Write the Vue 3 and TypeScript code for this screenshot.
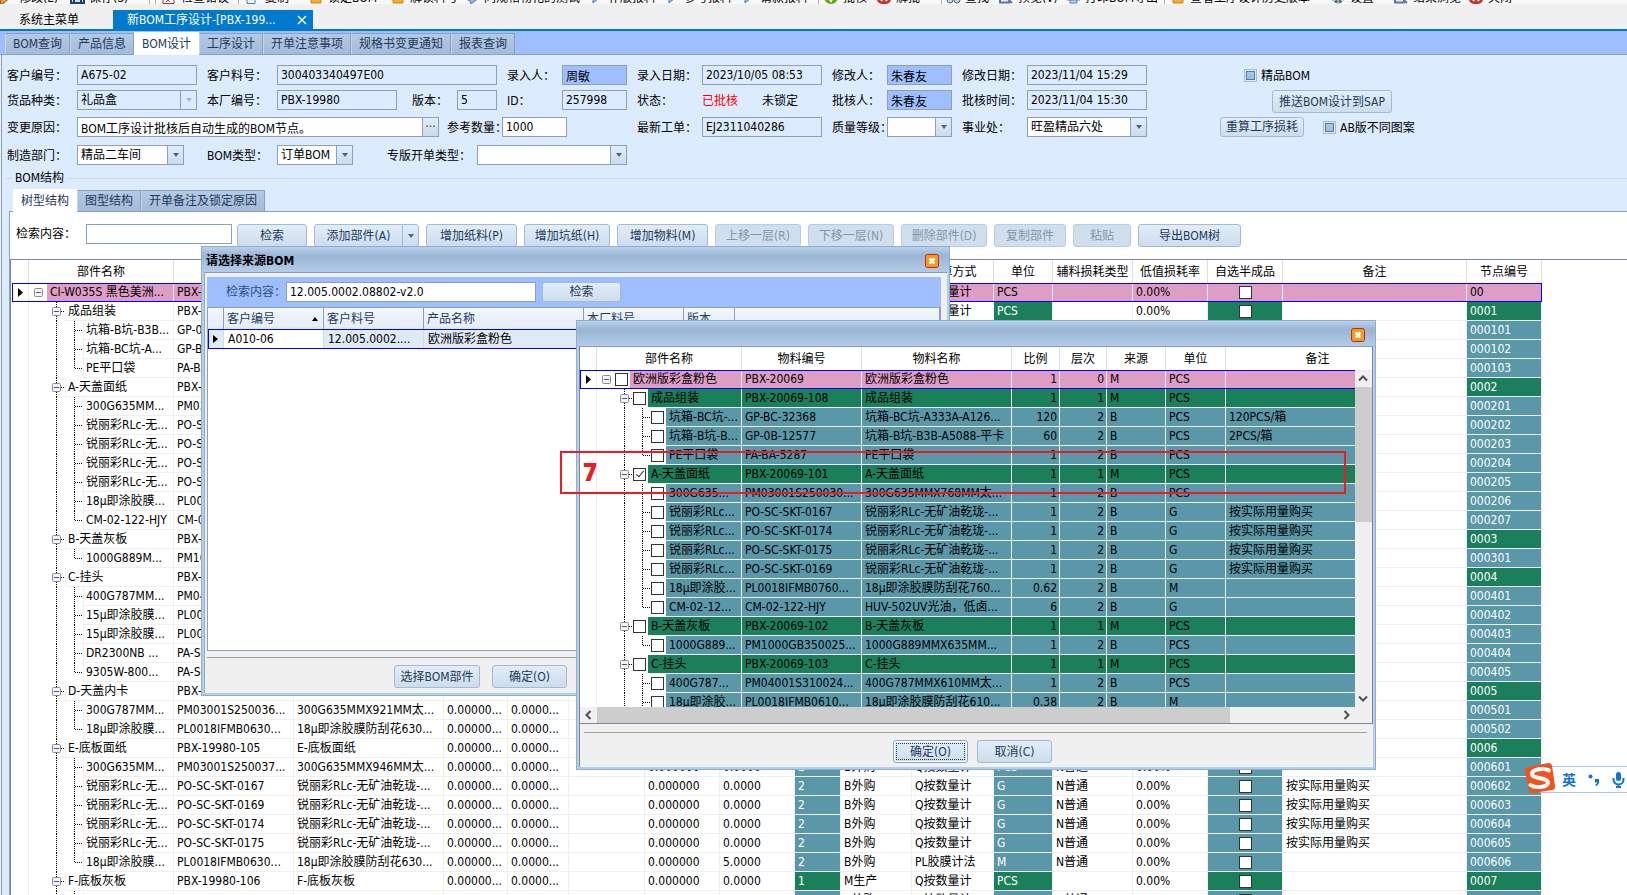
<script setup lang="ts">
import { computed, ref } from 'vue'

interface ToolItem { icon: string; text: string; width: number }
interface TreeRow { level: number; name: string; code: string; full: string; unit: string; node?: string; remark?: string; ratio?: string; checked?: boolean }

const toolItems: ToolItem[] = [
  { icon: 'pen', text: '修改(E)', width: 70 },
  { icon: 'disk', text: '保存(S)', width: 79 },
  { icon: 'sep', text: '', width: 6 },
  { icon: 'sep', text: '', width: 7 },
  { icon: 'doc', text: '检查错误', width: 76 },
  { icon: 'sep', text: '', width: 8 },
  { icon: 'copy', text: '复制', width: 63 },
  { icon: 'lock', text: '锁定BOM', width: 82 },
  { icon: 'lock', text: '解锁料号', width: 74 },
  { icon: 'chat', text: '同规格物化的测试', width: 124 },
  { icon: 'flag', text: '补版报料', width: 76 },
  { icon: 'flag', text: '参考报料', width: 76 },
  { icon: 'flag', text: '请款报料', width: 77 },
  { icon: 'sep', text: '', width: 6 },
  { icon: 'ok', text: '批核', width: 53 },
  { icon: 'no', text: '解批', width: 64 },
  { icon: 'sep', text: '', width: 5 },
  { icon: 'find', text: '查找', width: 53 },
  { icon: 'view', text: '预览(V)', width: 67 },
  { icon: 'print', text: '打印BOM导出', width: 98 },
  { icon: 'sep', text: '', width: 7 },
  { icon: 'lock', text: '查看工序设计历史版本', width: 160 },
  { icon: 'gear', text: '设置', width: 63 },
  { icon: 'view', text: '结果浏览', width: 75 },
  { icon: 'no', text: '关闭', width: 60 }
]

const pageTabs = ['BOM查询', '产品信息', 'BOM设计', '工序设计', '开单注意事项', '规格书变更通知', '报表查询']
const subTabs = ['树型结构', '图型结构', '开单备注及锁定原因']
const actions = [
  { text: '增加纸料(P)', cls: 'a91', off: false },
  { text: '增加坑纸(H)', cls: 'a86', off: false },
  { text: '增加物料(M)', cls: 'a91', off: false },
  { text: '上移一层(R)', cls: 'a86', off: true },
  { text: '下移一层(N)', cls: 'a86', off: true },
  { text: '删除部件(D)', cls: 'a86', off: true },
  { text: '复制部件', cls: 'a72', off: true },
  { text: '粘贴', cls: 'a58', off: true },
  { text: '导出BOM树', cls: 'a103', off: false }
]

const mainHeads = ['', '部件名称', '', '', '', '', '', '', '', '', '', '计算方式', '单位', '辅料损耗类型', '低值损耗率', '自选半成品', '备注', '节点编号']

const r = (level: number, name: string, code: string, full: string, node: string, unit: string, remark = ''): TreeRow => ({ level, name, code, full, node, unit, remark })
const buy = '按实际用量购买'
const ink = '锐丽彩RLc-无...'
const inkFull = '锐丽彩RLc-无矿油乾珑-...'
const mainRows: TreeRow[] = [
  r(0, 'CI-W035S 黑色美洲...', 'PBX-19980', 'CI-W035S 黑色美洲版', '00', 'PCS'),
  r(1, '成品组装', 'PBX-19980-108', '成品组装', '0001', 'PCS'),
  r(2, '坑箱-B坑-B3B...', 'GP-0B-12577', '坑箱-B坑-B3B', '000101', 'PCS'),
  r(2, '坑箱-BC坑-A...', 'GP-BC-32368', '坑箱-BC坑', '000102', 'PCS'),
  r(2, 'PE平口袋', 'PA-BA-5287', 'PE平口袋', '000103', 'PCS'),
  r(1, 'A-天盖面纸', 'PBX-19980-101', 'A-天盖面纸', '0002', 'PCS'),
  r(2, '300G635MM...', 'PM03001S250030...', '300G635MM', '000201', 'PCS'),
  r(2, ink, 'PO-SC-SKT-0167', inkFull, '000202', 'G', buy),
  r(2, ink, 'PO-SC-SKT-0174', inkFull, '000203', 'G'),
  r(2, ink, 'PO-SC-SKT-0175', inkFull, '000204', 'G'),
  r(2, ink, 'PO-SC-SKT-0169', inkFull, '000205', 'G'),
  r(2, '18µ即涂胶膜...', 'PL0018IFMB0760...', '18µ即涂胶膜', '000206', 'M'),
  r(2, 'CM-02-122-HJY', 'CM-02-122-HJY', 'HUV-502UV光油', '000207', 'G'),
  r(1, 'B-天盖灰板', 'PBX-19980-102', 'B-天盖灰板', '0003', 'PCS'),
  r(2, '1000G889M...', 'PM1000GB350025...', '1000G889MM', '000301', 'PCS'),
  r(1, 'C-挂头', 'PBX-19980-103', 'C-挂头', '0004', 'PCS'),
  r(2, '400G787MM...', 'PM04001S310024...', '400G787MM', '000401', 'PCS'),
  r(2, '15µ即涂胶膜...', 'PL0015IFMB0610...', '15µ即涂胶膜', '000402', 'M'),
  r(2, '15µ即涂胶膜...', 'PL0015IFMB0610...', '15µ即涂胶膜', '000403', 'M'),
  r(2, 'DR2300NB ...', 'PA-SC-2300', 'DR2300NB', '000404', 'PCS'),
  r(2, '9305W-800...', 'PA-SC-9305', '9305W-800', '000405', 'PCS'),
  r(1, 'D-天盖内卡', 'PBX-19980-104', 'D-天盖内卡', '0005', 'PCS'),
  r(2, '300G787MM...', 'PM03001S250036...', '300G635MMX921MM太...', '000501', 'PCS'),
  r(2, '18µ即涂胶膜...', 'PL0018IFMB0630...', '18µ即涂胶膜防刮花630...', '000502', 'M'),
  r(1, 'E-底板面纸', 'PBX-19980-105', 'E-底板面纸', '0006', 'PCS'),
  r(2, '300G635MM...', 'PM03001S250037...', '300G635MMX946MM太...', '000601', 'PCS'),
  r(2, ink, 'PO-SC-SKT-0167', inkFull, '000602', 'G', buy),
  r(2, ink, 'PO-SC-SKT-0169', inkFull, '000603', 'G', buy),
  r(2, ink, 'PO-SC-SKT-0174', inkFull, '000604', 'G', buy),
  r(2, ink, 'PO-SC-SKT-0175', inkFull, '000605', 'G', buy),
  r(2, '18µ即涂胶膜...', 'PL0018IFMB0630...', '18µ即涂胶膜防刮花630...', '000606', 'M'),
  r(1, 'F-底板灰板', 'PBX-19980-106', 'F-底板灰板', '0007', 'PCS'),
  r(2, '1000G889M...', 'PM1000GB350026...', '1000G889MMX635MM...', '000701', 'PCS')
]

const s = (level: number, name: string, code: string, full: string, ratio: string, unit: string, remark = '', checked = false): TreeRow => ({ level, name, code, full, ratio, unit, remark, checked })
const pickRows = ref<TreeRow[]>([
  s(0, '欧洲版彩盒粉色', 'PBX-20069', '欧洲版彩盒粉色', '1', 'PCS'),
  s(1, '成品组装', 'PBX-20069-108', '成品组装', '1', 'PCS'),
  s(2, '坑箱-BC坑-...', 'GP-BC-32368', '坑箱-BC坑-A333A-A126...', '120', 'PCS', '120PCS/箱'),
  s(2, '坑箱-B坑-B...', 'GP-0B-12577', '坑箱-B坑-B3B-A5088-平卡', '60', 'PCS', '2PCS/箱'),
  s(2, 'PE平口袋', 'PA-BA-5287', 'PE平口袋', '1', 'PCS'),
  s(1, 'A-天盖面纸', 'PBX-20069-101', 'A-天盖面纸', '1', 'PCS', '', true),
  s(2, '300G635...', 'PM03001S250030...', '300G635MMX768MM太...', '1', 'PCS'),
  s(2, '锐丽彩RLc...', 'PO-SC-SKT-0167', inkFull, '1', 'G', buy),
  s(2, '锐丽彩RLc...', 'PO-SC-SKT-0174', inkFull, '1', 'G', buy),
  s(2, '锐丽彩RLc...', 'PO-SC-SKT-0175', inkFull, '1', 'G', buy),
  s(2, '锐丽彩RLc...', 'PO-SC-SKT-0169', inkFull, '1', 'G', buy),
  s(2, '18µ即涂胶...', 'PL0018IFMB0760...', '18µ即涂胶膜防刮花760...', '0.62', 'M'),
  s(2, 'CM-02-12...', 'CM-02-122-HJY', 'HUV-502UV光油，低卤...', '6', 'G'),
  s(1, 'B-天盖灰板', 'PBX-20069-102', 'B-天盖灰板', '1', 'PCS'),
  s(2, '1000G889...', 'PM1000GB350025...', '1000G889MMX635MM...', '1', 'PCS'),
  s(1, 'C-挂头', 'PBX-20069-103', 'C-挂头', '1', 'PCS'),
  s(2, '400G787...', 'PM04001S310024...', '400G787MMX610MM太...', '1', 'PCS'),
  s(2, '18µ即涂胶...', 'PL0018IFMB0610...', '18µ即涂胶膜防刮花610...', '0.38', 'M')
])

const LINE: Record<string, string> = {
  none: '',
  rootbox: '',
  box: 'M9.5 0V5M9.5 14V19M14 9.5H18',
  v: 'M9.5 0V19',
  t: 'M9.5 0V19M10 9.5H18',
  l: 'M9.5 0V10M10 9.5H18'
}
function indents(rows: TreeRow[], i: number): string[] {
  const lv = rows[i].level
  if (lv === 0) return ['rootbox']
  if (lv === 1) return ['none', 'box']
  return ['none', 'v', rows[i + 1]?.level === 1 ? 'l' : 't']
}
const mainTree = computed(() => mainRows.map((row, i) => ({ row, marks: indents(mainRows, i) })))
const pickTree = computed(() => pickRows.value.map((row, i) => ({ row, marks: indents(pickRows.value, i) })))

const srcKeyword = ref('12.005.0002.08802-v2.0')
const keyword = ref('')
</script>

<template>
  <div class="app">
    <div class="toolbar">
      <div v-for="(t, i) in toolItems" :key="i" class="tool" :style="{ width: t.width + 'px' }">
        <span v-if="t.icon === 'sep'" class="tsep"></span>
        <template v-else>
          <svg width="15" height="14" viewBox="0 0 15 14" aria-hidden="true">
            <path v-if="t.icon === 'pen'" d="M0 14l1-5 8-8 4 4-9 8z" fill="#e8a03c" stroke="#8c5a28" />
            <path v-else-if="t.icon === 'disk'" d="M1 1h13v12H1zM4 9h7v4H4z" fill="#cfe0f2" stroke="#1f3f74" stroke-width="2" />
            <path v-else-if="t.icon === 'doc'" d="M1 .5h11v13H1zM4 8l4 4M8 8l-4 4" fill="#fff" stroke="#9a3b3b" />
            <path v-else-if="t.icon === 'copy'" d="M4 .5h9v9H4zM1 4h8v9.500H1z" fill="#f2f5fc" stroke="#6474b4" />
            <path v-else-if="t.icon === 'lock'" d="M2 6h10v7H2zM4 6V2h6v4" fill="#eab03a" stroke="#c98a16" />
            <path v-else-if="t.icon === 'chat'" d="M2 4h10l2 4-4 3-4 3-1-3-4-2z" fill="#8fb4e0" stroke="#557fb5" />
            <path v-else-if="t.icon === 'flag'" d="M4 0v13l6-5-6-3" fill="#9fc0e6" stroke="#4b78b0" />
            <g v-else-if="t.icon === 'ok'"><circle cx="7" cy="7" r="7" fill="#5da81e" /><path d="M4 7l3 4 4-7" fill="none" stroke="#fff" stroke-width="2" /></g>
            <g v-else-if="t.icon === 'no'"><rect x="0" y="0" width="14" height="14" rx="5" fill="#c8322b" /><path d="M4 4l6 7M10 4l-6 7" stroke="#fff" stroke-width="2" /></g>
            <g v-else-if="t.icon === 'find'" fill="#c7d3e3" stroke="#56657a"><circle cx="4" cy="10" r="3" /><circle cx="11" cy="10" r="3" /></g>
            <path v-else-if="t.icon === 'view'" d="M1 .5h9v12H1zM7 7l6 6" fill="#e8eefb" stroke="#6671a8" stroke-width="2" />
            <path v-else-if="t.icon === 'print'" d="M1 4h13v6H1zM4 8h7v5H4z" fill="#bcd2ee" stroke="#5f7fae" />
            <circle v-else cx="7" cy="7" r="5" fill="#c3cddb" stroke="#5e6d84" stroke-width="3" stroke-dasharray="3 1" />
          </svg>
          <span class="tname">{{ t.text }}</span>
        </template>
      </div>
    </div>

    <nav class="docs">
      <button type="button" class="doc">系统主菜单</button>
      <button type="button" class="doc doc-on">
        <span>新BOM工序设计-[PBX-199...</span>
        <svg width="10" height="10" viewBox="0 0 10 10" aria-hidden="true"><path d="M1 1l8 8M9 1l-8 8" stroke="#fff" stroke-width="1.500" /></svg>
      </button>
    </nav>

    <nav class="tabs page-tabs">
      <button v-for="t in pageTabs" :key="t" type="button" class="tab" :class="{ on: t === 'BOM设计' }">{{ t }}</button>
    </nav>

    <main class="panel">
      <form class="form" @submit.prevent>
        <div class="row">
          <label class="f"><span class="l70">客户编号：</span><input class="w120 ro" value="A675-02" readonly></label>
          <label class="f"><span class="l70">客户料号：</span><input class="w220 ro" value="300403340497E00" readonly></label>
          <label class="f"><span class="l55">录入人：</span><input class="w65 who" value="周敏" readonly></label>
          <label class="f"><span class="l65">录入日期：</span><input class="w120 ro" value="2023/10/05 08:53" readonly></label>
          <label class="f"><span class="l55">修改人：</span><input class="w65 who" value="朱春友" readonly></label>
          <label class="f"><span class="l65">修改日期：</span><input class="w120 ro" value="2023/11/04 15:29" readonly></label>
          <label class="f tick tick-a"><input type="checkbox" class="tri"><span>精品BOM</span></label>
        </div>
        <div class="row row2">
          <label class="f"><span class="l70">货品种类：</span><span class="combo w120 ro"><select disabled><option>礼品盒</option></select><i class="arr off"></i></span></label>
          <label class="f"><span class="l70">本厂编号：</span><input class="w120 ro" value="PBX-19980" readonly></label>
          <label class="f"><span class="l50">版本：</span><input class="w40 ro" value="5" readonly></label>
          <label class="f"><span class="l55">ID：</span><input class="w65 ro" value="257998" readonly></label>
          <div class="f"><span class="l65">状态：</span><span class="l60 red">已批核</span><span class="l60">未锁定</span></div>
          <label class="f"><span class="l55">批核人：</span><input class="w65 who" value="朱春友" readonly></label>
          <label class="f"><span class="l65">批核时间：</span><input class="w120 ro" value="2023/11/04 15:30" readonly></label>
          <button type="button" class="btn push">推送BOM设计到SAP</button>
        </div>
        <div class="row row3">
          <label class="f"><span class="l70">变更原因：</span><span class="combo w362"><input value="BOM工序设计批核后自动生成的BOM节点。"><i class="dots">···</i></span></label>
          <label class="f near"><span class="l55">参考数量：</span><input class="w65" value="1000"></label>
          <label class="f far"><span class="l65">最新工单：</span><input class="w120 ro" value="EJ2311040286" readonly></label>
          <label class="f"><span class="l55">质量等级：</span><span class="combo w65"><select><option></option></select><i class="arr"></i></span></label>
          <label class="f"><span class="l65">事业处：</span><span class="combo w120"><select><option>旺盈精品六处</option></select><i class="arr"></i></span></label>
          <button type="button" class="btn recalc">重算工序损耗</button>
          <label class="f tick"><input type="checkbox" class="tri"><span>AB版不同图案</span></label>
        </div>
        <div class="row">
          <label class="f"><span class="l70">制造部门：</span><span class="combo w107"><select><option>精品二车间</option></select><i class="arr"></i></span></label>
          <label class="f bomtype"><span class="l70">BOM类型：</span><span class="combo w76"><select><option>订单BOM</option></select><i class="arr"></i></span></label>
          <label class="f special"><span class="l90">专版开单类型：</span><span class="combo w150"><select><option></option></select><i class="arr"></i></span></label>
        </div>
      </form>

      <section class="box">
        <h2 class="legend"><span>BOM结构</span></h2>
        <nav class="tabs sub-tabs">
          <button v-for="t in subTabs" :key="t" type="button" class="tab" :class="{ on: t === '树型结构' }">{{ t }}</button>
        </nav>
        <div class="sheet">
          <div class="bar">
            <label class="f"><span class="l70">检索内容：</span><input v-model="keyword" class="w146"></label>
            <button type="button" class="btn find">检索</button>
            <div class="split"><button type="button" class="btn a89">添加部件(A)</button><button type="button" class="btn drop" aria-label="更多"><i class="tri-down"></i></button></div>
            <button v-for="a in actions" :key="a.text" type="button" class="btn" :class="a.cls" :disabled="a.off">{{ a.text }}</button>
          </div>

          <div class="gridwrap">
            <table class="grid main-grid">
              <colgroup>
                <col class="c17"><col class="c145"><col class="c120"><col class="c150"><col class="c64"><col class="c61"><col class="c76"><col class="c75"><col class="c75"><col class="c46"><col class="c71"><col class="c82"><col class="c59"><col class="c80"><col class="c75"><col class="c75"><col class="c184"><col class="c75">
              </colgroup>
              <thead><tr><th v-for="(h, i) in mainHeads" :key="i">{{ h }}</th></tr></thead>
              <tbody>
                <tr v-for="({ row, marks }, i) in mainTree" :key="i" :class="'lv' + row.level">
                  <td class="ind"><svg v-if="i === 0" width="5" height="9" viewBox="0 0 5 9"><path d="M0 0l5 4.500L0 9z" /></svg></td>
                  <td class="tree"><div class="node">
                    <svg v-for="(m, k) in marks" :key="k" class="mark" width="18" height="19" viewBox="0 0 18 19">
                      <path v-if="LINE[m]" :d="LINE[m]" stroke="#000" stroke-dasharray="1 1" fill="none" />
                      <g v-if="m === 'box' || m === 'rootbox'"><rect x="5.500" y="5.500" width="8" height="8" rx="1" fill="#f5f5f5" stroke="#8c8c8c" /><path d="M7 9.500h5" stroke="#3458a8" /></g>
                    </svg>
                    <span class="name">{{ row.name }}</span>
                  </div></td>
                  <td>{{ row.code }}</td>
                  <td>{{ row.full }}</td>
                  <td>0.00000...</td>
                  <td>0.0000...</td>
                  <td></td>
                  <td>0.000000</td>
                  <td>{{ row.unit === 'M' ? '5.0000' : '0.0000' }}</td>
                  <td class="tint">{{ row.level }}</td>
                  <td>{{ row.level === 2 ? 'B外购' : 'M生产' }}</td>
                  <td>{{ row.unit === 'M' ? 'PL胶膜计法' : 'Q按数量计' }}</td>
                  <td class="tint">{{ row.unit }}</td>
                  <td>{{ row.level === 2 ? 'N普通' : '' }}</td>
                  <td>0.00%</td>
                  <td class="tint mid"><input type="checkbox" class="chk" aria-label="自选半成品"></td>
                  <td>{{ row.remark }}</td>
                  <td class="tint">{{ row.node }}</td>
                </tr>
              </tbody>
            </table>
          </div>
        </div>
      </section>
    </main>

    <section class="win win-source" role="dialog" aria-label="请选择来源BOM">
      <header class="cap"><strong>请选择来源BOM</strong>
        <button type="button" class="close" aria-label="关闭"><svg width="14" height="14" viewBox="0 0 14 14"><rect x=".5" y=".5" width="13" height="13" rx="2" fill="#f59a1c" stroke="#c02a1a" /><path d="M4.500 4.500l5 5M9.500 4.500l-5 5" stroke="#fff" stroke-width="2.500" /></svg></button>
      </header>
      <div class="body src-body">
        <div class="src-bar">
          <label class="f"><span class="l60">检索内容：</span><input v-model="srcKeyword" class="w250"></label>
          <button type="button" class="btn src-find">检索</button>
        </div>
        <div class="src-list">
          <table class="src-grid">
            <colgroup><col class="c16"><col class="c100"><col class="c100"><col class="c160"><col class="c100"><col class="c51"><col></colgroup>
            <thead><tr><th></th><th><span class="sorted">客户编号<i class="tri-up"></i></span></th><th>客户料号</th><th>产品名称</th><th>本厂料号</th><th>版本</th><th></th></tr></thead>
            <tbody><tr><td class="ind"><svg width="5" height="8" viewBox="0 0 5 8"><path d="M0 0l5 4L0 8z" /></svg></td><td class="cur">A010-06</td><td>12.005.0002....</td><td>欧洲版彩盒粉色</td><td></td><td></td><td></td></tr></tbody>
          </table>
        </div>
        <footer class="src-foot">
          <button type="button" class="btn a86">选择BOM部件</button>
          <button type="button" class="btn a75">确定(O)</button>
          <button type="button" class="btn a75">取消(C)</button>
        </footer>
      </div>
    </section>

    <section class="win win-pick" role="dialog" aria-label="选择部件">
      <header class="cap">
        <button type="button" class="close" aria-label="关闭"><svg width="14" height="14" viewBox="0 0 14 14"><rect x=".5" y=".5" width="13" height="13" rx="2" fill="#f59a1c" stroke="#c02a1a" /><path d="M4.500 4.500l5 5M9.500 4.500l-5 5" stroke="#fff" stroke-width="2.500" /></svg></button>
      </header>
      <div class="body pick-body">
        <div class="pick-list">
          <table class="grid pick-grid">
            <colgroup><col class="c17"><col class="c145"><col class="c120"><col class="c150"><col class="c48"><col class="c47"><col class="c59"><col class="c60"><col class="c184"></colgroup>
            <thead><tr><th></th><th>部件名称</th><th>物料编号</th><th>物料名称</th><th>比例</th><th>层次</th><th>来源</th><th>单位</th><th>备注</th></tr></thead>
            <tbody>
              <tr v-for="({ row, marks }, i) in pickTree" :key="i" :class="'lv' + row.level">
                <td class="ind"><svg v-if="i === 0" width="5" height="9" viewBox="0 0 5 9"><path d="M0 0l5 4.500L0 9z" /></svg></td>
                <td class="tree"><div class="node">
                  <svg v-for="(m, k) in marks" :key="k" class="mark" width="18" height="19" viewBox="0 0 18 19">
                    <path v-if="LINE[m]" :d="LINE[m]" stroke="#000" stroke-dasharray="1 1" fill="none" />
                    <g v-if="m === 'box' || m === 'rootbox'"><rect x="5.500" y="5.500" width="8" height="8" rx="1" fill="#f5f5f5" stroke="#8c8c8c" /><path d="M7 9.500h5" stroke="#3458a8" /></g>
                  </svg>
                  <input v-model="row.checked" type="checkbox" class="chk" :aria-label="row.name">
                  <span class="name">{{ row.name }}</span>
                </div></td>
                <td>{{ row.code }}</td>
                <td>{{ row.full }}</td>
                <td class="num">{{ row.ratio }}</td>
                <td class="num">{{ row.level }}</td>
                <td>{{ row.level === 2 ? 'B' : 'M' }}</td>
                <td>{{ row.unit }}</td>
                <td>{{ row.remark }}</td>
              </tr>
            </tbody>
          </table>
          <div class="vbar">
            <svg width="16" height="17" viewBox="0 0 16 17"><path d="M4 10.500l4-4 4 4" fill="none" stroke="#505050" stroke-width="2" /></svg>
            <span class="vthumb"></span>
            <svg class="end" width="16" height="17" viewBox="0 0 16 17"><path d="M4 6.500l4 4 4-4" fill="none" stroke="#505050" stroke-width="2" /></svg>
          </div>
        </div>
        <div class="hbar">
          <svg width="17" height="16" viewBox="0 0 17 16"><path d="M10.500 4l-4 4 4 4" fill="none" stroke="#505050" stroke-width="2" /></svg>
          <span class="hthumb"></span>
          <svg class="hend" width="17" height="16" viewBox="0 0 17 16"><path d="M6.500 4l4 4-4 4" fill="none" stroke="#505050" stroke-width="2" /></svg>
        </div>
        <footer class="pick-foot">
          <button type="button" class="btn a75 focus">确定(O)</button>
          <button type="button" class="btn a75">取消(C)</button>
        </footer>
      </div>
    </section>

    <div class="callout"><b>7</b></div>

    <aside class="ime">
      <svg class="logo" width="32" height="32" viewBox="0 0 32 32" aria-hidden="true">
        <path d="M4 5L24 1q3-.5 4 2.500L31 24q.5 3-2.500 4L9 31q-3 .5-4-2.500L1 9q-.5-3 3-4z" fill="#f4511e" />
        <path d="M25 8.500C20 5.500 8 7 8 12s16 3.500 16 8.500S11 26.500 6.500 23" fill="none" stroke="#fff" stroke-width="4" stroke-linecap="round" />
      </svg>
      <b>英</b>
      <svg width="14" height="14" viewBox="0 0 14 14" aria-hidden="true"><circle cx="3.500" cy="3.500" r="2" fill="#1172d8" /><path d="M8 6h4v3q0 3-3.500 4v-1.500Q10 11 10 9.500H8z" fill="#1172d8" /></svg>
      <svg width="13" height="16" viewBox="0 0 13 16" aria-hidden="true"><rect x="4" y="0" width="5" height="9" rx="2.500" fill="#1172d8" /><path d="M1.500 6v1.500a5 5 0 0 0 10 0V6M6.500 12v2M4 15h5" fill="none" stroke="#1172d8" stroke-width="2" /></svg>
    </aside>
  </div>
</template>

<style>
body { margin: 0; overflow: hidden; }
</style>

<style scoped>
.app { position: relative; height: 100vh; overflow: hidden; display: flex; flex-direction: column; background: #f0f0f0; color: #000; font: 12px/16px "DejaVu Sans Condensed", "Noto Sans CJK SC", sans-serif; }
.app *, .app *::before, .app *::after { box-sizing: border-box; }
input, select, button { font: inherit; color: inherit; margin: 0; }
.toolbar { flex: none; height: 4px; margin-bottom: 6px; display: flex; align-items: flex-end; overflow: hidden; background: #f8f8f8; }
.tool { flex: none; display: flex; align-items: flex-end; gap: 4px; white-space: nowrap; }
.tool svg { flex: none; display: block; }
.tname { line-height: 11px; }
.tsep { width: 1px; height: 16px; background: #b0b0b0; }

.docs { flex: none; display: flex; height: 21px; border-bottom: 2px solid #007acc; }
.doc { width: 113px; border: 0; padding: 0 0 0 19px; background: none; text-align: left; white-space: nowrap; }
.doc-on { width: 200px; padding: 0 6px 0 14px; display: flex; align-items: center; justify-content: space-between; background: #007acc; color: #fff; }

.tabs { flex: none; display: flex; align-items: flex-end; }
.page-tabs { height: 24px; padding-left: 5px; background: #9fbefe; border-bottom: 1px solid #8ba0bc; }
.tab { height: 21px; padding: 0 7px; border: 1px solid #8ba0bc; border-left-color: #c5d5ea; border-bottom: 0; background: linear-gradient(#b4c9e3, #a3bbda); color: #1e395b; line-height: 20px; white-space: nowrap; }
.tab.on { height: 23px; margin-bottom: -1px; background: #fff; border-color: #fff; position: relative; }

.panel { flex: 1; min-height: 0; display: flex; flex-direction: column; margin-left: 1px; border-left: 1px solid #8ba0bc; background: #dcebfe; }
.form { flex: none; padding: 10px 0 0 5px; }
.row { display: flex; align-items: flex-start; gap: 10px; height: 25px; white-space: nowrap; }
.row2 { height: 27px; }
.row3 { height: 28px; }
.f { flex: none; display: flex; align-items: center; height: 20px; white-space: nowrap; }
.f > span:not(.combo) { line-height: 18px; }
.row .f > span:not(.combo) { padding-top: 1px; }
.l50 { width: 50px; padding-left: 5px; }
.l55 { width: 55px; }
.l60 { width: 60px; }
.l65 { width: 65px; }
.l70 { width: 70px; }
.l90 { width: 90px; }
.red { color: #f00; }
.w40 { width: 40px; }
.w65 { width: 65px; }
.w76 { width: 76px; }
.w107 { width: 107px; }
.w120 { width: 120px; }
.w146 { width: 146px; }
.w150 { width: 150px; }
.w220 { width: 220px; }
.w250 { width: 250px; }
.w362 { width: 362px; }
.f > input:not([type]), .combo { height: 20px; border: 1px solid #8ba0bc; padding: 0 3px; background: #fff; border-radius: 0; outline: 0; }
.f > input.ro, .combo.ro { background: #dcebfe; }
.f > input.who { background: #9fbefe; }
.f > .combo { display: flex; padding: 0; }
.combo select, .combo input { flex: 1; min-width: 0; height: 18px; border: 0; padding: 0 3px; appearance: none; background: transparent; color: #000; opacity: 1; outline: 0; }
.arr, .dots { flex: none; width: 16px; border-left: 1px solid #8ba0bc; background: linear-gradient(#e3edf8, #cbdbea); display: flex; align-items: center; justify-content: center; font-style: normal; line-height: 14px; color: #1e395b; }
.arr::after, .tri-down { content: ''; border: 3px solid transparent; border-top: 4px solid #4a6484; border-bottom: 0; }
.arr.off { background: none; }
.arr.off::after { border-top-color: #a3b8cf; }
.near { margin-left: -2px; }
.far { margin-left: 60px; }
.tick { gap: 4px; }
.tick-a { margin-left: 87px; }
.tri { appearance: none; width: 13px; height: 13px; border: 1px solid #a8bcd8; background: linear-gradient(#a9c8ea, #9bbbdd) content-box #fff; padding: 1px; outline: 1px solid #5b7ba6; outline-offset: -3px; }
.btn { flex: none; height: 23px; padding: 0 2px; border: 1px solid #a6b8d3; border-radius: 3px; background: linear-gradient(#e2edf9, #cddded); color: #1e395b; line-height: 20px; text-align: center; white-space: nowrap; }
.btn:disabled { background: #d0dfee; border-color: #bccbe0; color: #8794a6; }
.push { width: 120px; margin-left: 115px; }
.recalc { width: 84px; height: 20px; margin: 0 9px 0 63px; line-height: 18px; }
.bomtype { margin-left: 13px; }
.special { margin-left: 24px; }
.find { width: 70px; margin-left: -2px; }
.a58 { width: 58px; }
.a72 { width: 72px; }
.a75 { width: 75px; }
.a86 { width: 86px; }
.a89 { width: 89px; }
.a91 { width: 91px; }
.a103 { width: 103px; }

.box { flex: 1; min-height: 0; display: flex; flex-direction: column; margin: 0 0 0 4px; }
.legend { flex: none; display: flex; align-items: center; margin: 0; height: 16px; font: inherit; }
.legend::before { content: ''; width: 6px; height: 1px; background: #d5d8dc; }
.legend::after { content: ''; flex: 1; height: 1px; background: #d5d8dc; }
.legend span { padding: 0 3px; }
.sub-tabs { height: 26px; margin-left: 3px; padding-left: 4px; border-bottom: 1px solid #8ba0bc; }
.sheet { flex: 1; min-height: 0; display: flex; flex-direction: column; margin-left: 3px; border-left: 1px solid #8ba0bc; background: #fff; }
.bar { flex: none; display: flex; gap: 7px; height: 47px; padding: 12px 0 0 6px; }
.split { display: flex; }
.split .a89 { border-radius: 3px 0 0 3px; }
.drop { width: 17px; margin-left: -1px; border-radius: 0 3px 3px 0; display: flex; align-items: center; justify-content: center; }

.gridwrap { flex: 1; min-height: 0; overflow: hidden; padding-left: 1px; border-top: 1px solid #83839a; border-left: 1px solid #83839a; }
.grid { width: 0; table-layout: fixed; border-collapse: separate; border-spacing: 0; line-height: 18px; }
.c16 { width: 16px; }
.c17 { width: 17px; }
.c46 { width: 46px; }
.c47 { width: 47px; }
.c48 { width: 48px; }
.c51 { width: 51px; }
.c59 { width: 59px; }
.c60 { width: 60px; }
.c61 { width: 61px; }
.c64 { width: 64px; }
.c71 { width: 71px; }
.c75 { width: 75px; }
.c76 { width: 76px; }
.c80 { width: 80px; }
.c82 { width: 82px; }
.c100 { width: 100px; }
.c120 { width: 120px; }
.c145 { width: 145px; }
.c150 { width: 150px; }
.c160 { width: 160px; }
.c184 { width: 184px; }
.grid th { height: 23px; padding: 0; border-right: 1px solid #dedede; font-weight: normal; white-space: nowrap; overflow: hidden; background: #fff; }
.grid td { height: 19px; padding: 0 0 0 3px; border-right: 1px solid #efefef; border-bottom: 1px solid #efefef; white-space: nowrap; overflow: hidden; }
.grid td.ind { padding: 0 0 0 6px; border-bottom: 0; line-height: 0; }
.grid td.tree { padding: 0; border-bottom: 0; }
.node { display: flex; height: 19px; align-items: center; }
.mark { flex: none; display: block; }
.name { flex: 1; min-width: 0; height: 19px; padding-left: 3px; border-bottom: 1px solid #efefef; overflow: hidden; }
.main-grid .lv1 .name, .main-grid .lv2 .name { border-left: 1px solid #efefef; padding-left: 2px; }
.lv0 { outline: 1px solid #00f; outline-offset: -1px; }
.lv0 td:not(.ind):not(.tree), .lv0 .name { background: #de9dc5; }
.main-grid .lv1 .tint { background: #1c7f5b; color: #fff; }
.main-grid .lv2 .tint { background: #5997a9; color: #fff; }
.grid td.mid { padding: 0; text-align: center; line-height: 0; }
.pick-grid .lv1 td:not(.ind):not(.tree), .pick-grid .lv1 .name { background: #1c7f5b; }
.pick-grid .lv2 td:not(.ind):not(.tree), .pick-grid .lv2 .name { background: #5997a9; }
.grid td.num { text-align: right; padding: 0 2px 0 0; }
.chk { flex: none; appearance: none; width: 13px; height: 13px; border: 1px solid #333; background: #fff; }
.node .chk { margin-right: 2px; }
.chk:checked::after { content: ''; display: block; width: 4px; height: 8px; margin: 0 0 0 4px; border: solid #333; border-width: 0 1px 1px 0; transform: rotate(40deg); }

.win { position: absolute; display: flex; flex-direction: column; border: 1px solid #8fadd0; background: #b5cfeb; padding: 0 2px 2px; }
.win-source { left: 201px; top: 246px; width: 749px; height: 450px; }
.win-pick { left: 576px; top: 320px; width: 800px; height: 450px; }
.cap { flex: none; display: flex; align-items: center; height: 25px; margin: 0 -2px; padding: 3px 10px 0 4px; background: linear-gradient(#b9d1ea, #9ab5d5 35%, #b3cce8); }
.close { margin-left: auto; padding: 0; border: 0; background: none; line-height: 0; }
.body { flex: 1; min-height: 0; display: flex; flex-direction: column; background: #f0f0f0; border-top: 1px solid #8a9bb5; }
.src-body { padding: 4px 6px 0 2px; border-left: 1px solid #8fadd0; }
.src-bar { flex: none; display: flex; align-items: center; gap: 6px; height: 30px; padding-left: 19px; background: #9fbefe; color: #2f4f80; }
.src-bar input { color: #000; }
.src-find { width: 79px; height: 20px; line-height: 18px; }
.src-list { flex: none; height: 344px; border: 1px solid #8ba0bc; background: #fff; }
.src-grid { width: 100%; table-layout: fixed; border-collapse: separate; border-spacing: 0; }
.src-grid th { height: 21px; padding: 0 0 0 3px; border-right: 1px solid #8ba0bc; background: linear-gradient(#f3f7fd, #e3ecf8); color: #1e395b; font-weight: normal; text-align: left; white-space: nowrap; }
.src-grid tbody tr { outline: 1px solid #00f; outline-offset: -1px; }
.src-grid td { height: 20px; padding: 0 0 0 4px; background: #e0eaf5; border-right: 1px solid #cbdcf0; white-space: nowrap; overflow: hidden; }
.src-grid td.ind { padding-left: 5px; line-height: 0; }
.src-grid td.cur { background: #fff; }
.sorted { display: flex; align-items: center; justify-content: space-between; padding-right: 5px; }
.tri-up { border: 3px solid transparent; border-bottom: 4px solid #000; border-top: 0; }
.src-foot { flex: 1; display: flex; gap: 12px; margin-top: 6px; padding: 7px 0 0 187px; border-top: 1px solid #a0a0a0; }

.pick-list { position: relative; flex: none; height: 360px; overflow: hidden; background: #fff; border-right: 1px solid #83839a; }
.pick-body { border-left: 1px solid #83839a; }
.vbar { position: absolute; right: 0; top: 23px; bottom: 0; width: 17px; display: flex; flex-direction: column; background: #f0f0f0; }
.vbar svg, .hbar svg { flex: none; display: block; }
.vthumb { height: 135px; background: #cdcdcd; }
.end { margin-top: auto; }
.hbar { flex: none; display: flex; height: 17px; padding-right: 17px; border-right: 1px solid #83839a; border-bottom: 1px solid #83839a; }
.hthumb { width: 633px; background: #cdcdcd; }
.hend { margin-left: auto; }
.pick-foot { display: flex; justify-content: center; gap: 9px; margin: 8px 6px 0 4px; padding: 7px 6px 0 0; border-top: 1px solid #a0a0a0; }
.focus { border-color: #8ba5c9; box-shadow: inset 0 0 0 1px #fff; outline: 1px dotted #1e395b; outline-offset: -4px; }

.callout { position: absolute; left: 560px; top: 451px; width: 786px; height: 43px; padding: 5px 0 0 21px; border: 2px solid #ee1b24; color: #ee1b24; font: bold 24px/28px "Open Sans", sans-serif; pointer-events: none; }
.ime { position: absolute; right: 0; top: 766px; width: 87px; height: 27px; display: flex; align-items: center; gap: 11px; padding-left: 21px; border: 1px solid #a9c6ea; border-right: 0; background: #fff; color: #1172d8; font-size: 14px; }
.logo { position: absolute; left: -17px; top: -5px; }
</style>
